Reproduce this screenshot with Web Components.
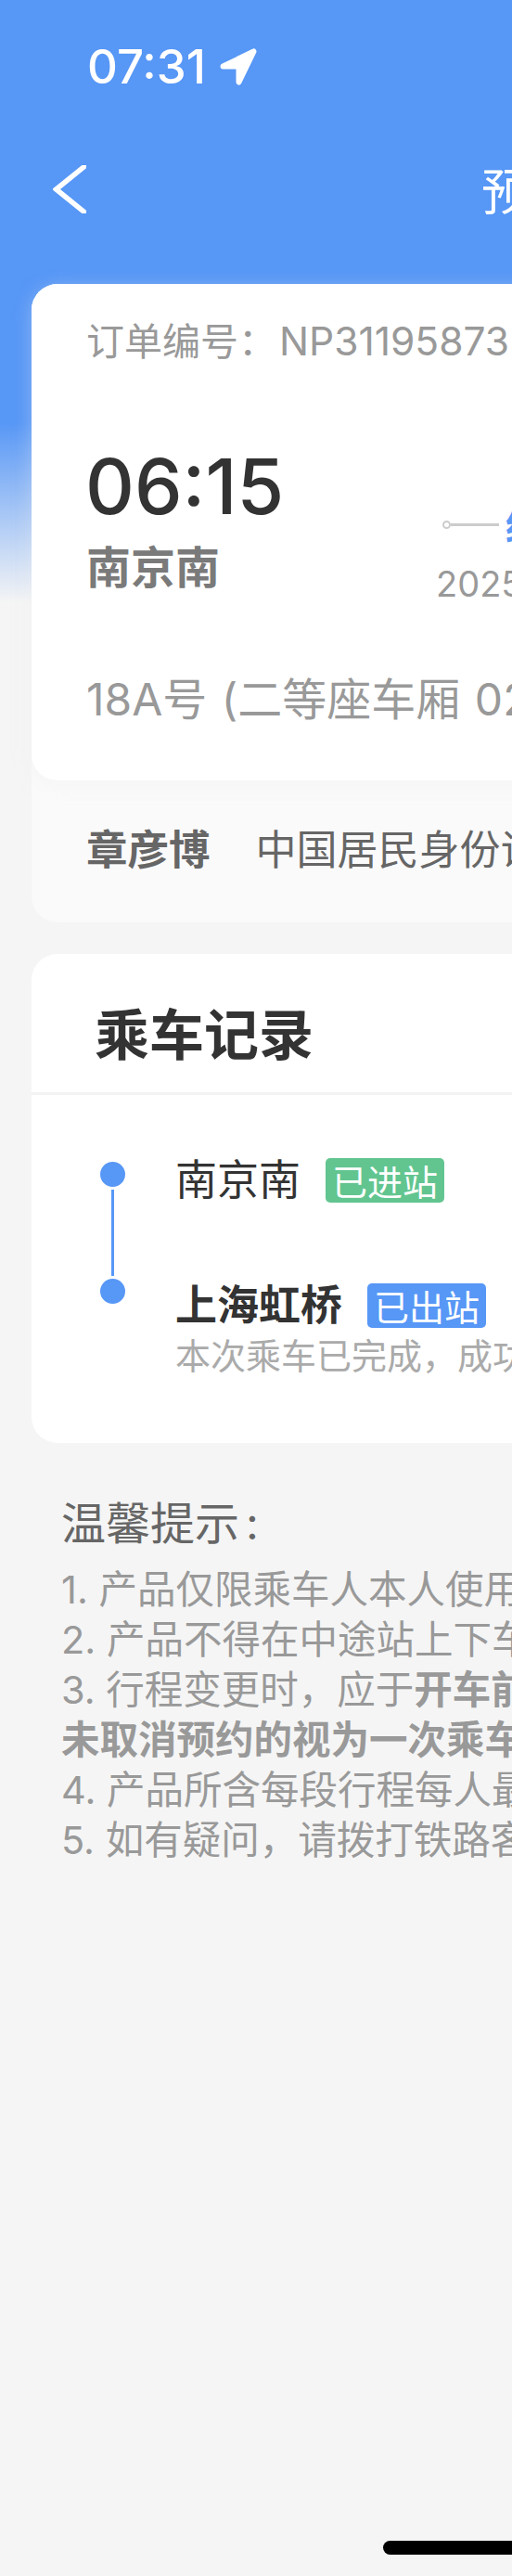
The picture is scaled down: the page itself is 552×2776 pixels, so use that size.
<!DOCTYPE html>
<html lang="zh">
<head>
<meta charset="utf-8">
<title>预约详情</title>
<style>
  html, body { margin: 0; padding: 0; background: #f5f5f5; }
  body { width: 552px; height: 2776px; overflow: hidden; font-family: Inter, "Noto Sans CJK SC", sans-serif; }
</style>
</head>
<body>
<order-page>
  <status-bar time="07:31"></status-bar>
  <nav-bar title="预约详情"></nav-bar>
  <ticket-card order="NP31195873" time="06:15" station="南京南" date="2025" seat="18A号 (二等座车厢 02" passenger="章彦博" idtype="中国居民身份证"></ticket-card>
  <ride-record>
    <ride-stop name="南京南" tag="已进站" tone="green"></ride-stop>
    <ride-stop name="上海虹桥" tag="已出站" tone="blue" bold note="本次乘车已完成，成功"></ride-stop>
  </ride-record>
  <tips-block heading="温馨提示">
    <div>1. 产品仅限乘车人本人使用</div>
    <div>2. 产品不得在中途站上下车</div>
    <div>3. 行程变更时，应于<b>开车前</b></div>
    <div><b>未取消预约的视为一次乘车</b></div>
    <div>4. 产品所含每段行程每人最</div>
    <div>5. 如有疑问，请拨打铁路客</div>
  </tips-block>
</order-page>
<script>
class OrderPage extends HTMLElement {
  constructor() {
    super();
    this.attachShadow({mode: 'open'}).innerHTML = `
      <style>
        :host { display: block; width: 552px; height: 2776px; position: relative; overflow: hidden;
          background: linear-gradient(#5797f6 0, #5797f6 455px, #f5f5f5 650px); }
        .indicator { position: absolute; left: 413px; top: 2738px; width: 400px; height: 15px; border-radius: 8px; background: #000; }
      </style>
      <slot></slot>
      <div class="indicator"></div>`;
  }
}

class StatusBar extends HTMLElement {
  constructor() {
    super();
    this.attachShadow({mode: 'open'}).innerHTML = `
      <style>
        :host { display: flex; align-items: center; height: 144px; box-sizing: border-box; padding: 0 0 0 94px;
          color: #fff; font: 500 51px/50px Inter, sans-serif; }
        svg { margin-left: 15px; width: 40px; height: 40px; }
      </style>
      <span id="t"></span>
      <svg viewBox="0 0 40 40"><path d="M3.500 19.500 36.500 3.500 20.500 36.500V19.500z" fill="#fff" stroke="#fff" stroke-width="6" stroke-linejoin="round"/></svg>`;
  }
  connectedCallback() { this.shadowRoot.getElementById('t').textContent = this.getAttribute('time'); }
}

class NavBar extends HTMLElement {
  constructor() {
    super();
    this.attachShadow({mode: 'open'}).innerHTML = `
      <style>
        :host { display: flex; align-items: center; height: 162px; padding: 0 0 42px 57px; box-sizing: border-box; width: 1200px; color: #fff; }
        svg { width: 36px; height: 52px; }
        span { margin-left: 426px; font: 400 54px/60px "Noto Sans CJK SC", sans-serif; white-space: nowrap; }
      </style>
      <svg viewBox="0 0 36 52"><path d="M37 -1 3.500 26 37 53" fill="none" stroke="#fff" stroke-width="5.500"/></svg>
      <span id="t"></span>`;
  }
  connectedCallback() { this.shadowRoot.getElementById('t').textContent = this.getAttribute('title'); }
}

class TicketCard extends HTMLElement {
  constructor() {
    super();
    this.attachShadow({mode: 'open'}).innerHTML = `
      <style>
        :host { display: block; margin-left: 34px; width: 1100px; border-radius: 28px; background: #fafafa;
          font-family: Inter, "Noto Sans CJK SC", sans-serif; white-space: nowrap; }
        .main { height: 535px; box-sizing: border-box; padding: 34px 0 0 59px; background: #fff; border-radius: 28px;
          box-shadow: 0 4px 20px rgba(238,238,238,.35); position: relative; }
        .order { font-size: 41px; line-height: 56px; color: #999; }
        .order span { font-size: 42.500px; margin-left: 3px; }
        .row { display: flex; margin-top: 84px; }
        .from { width: 377px; }
        .time { font-size: 82px; font-weight: 500; line-height: 90px; color: #333; margin-left: -1px; }
        .station { font: 700 48px/64px "Noto Sans CJK SC", sans-serif; color: #7a7a7a; margin-top: 6px; }
        .mid { padding-top: 65px; }
        .line { display: flex; align-items: center; height: 40px; padding-left: 7px; }
        .line i { width: 9px; height: 9px; box-sizing: border-box; border: 2px solid #ccc; border-radius: 50%; }
        .line u { width: 52px; height: 3px; background: #ccc; }
        .line b { margin-left: 7px; color: #5797f6; font: 700 40px/40px "Noto Sans CJK SC", sans-serif; }
        .date { font-size: 38px; line-height: 44px; color: #999; margin-top: 22px; }
        .seat { font-size: 48px; line-height: 64px; color: #999; margin-top: 71px; word-spacing: 2px; }
        .person { height: 153px; box-sizing: border-box; padding: 41px 0 0 59px; display: flex; gap: 49px; font: 44px/62px "Noto Sans CJK SC", sans-serif; color: #666; }
        .person b { font-weight: 700; font-size: 44.500px; }
      </style>
      <div class="main">
        <div class="order">订单编号：<span id="order"></span></div>
        <div class="row">
          <div class="from">
            <div class="time" id="time"></div>
            <div class="station" id="station"></div>
          </div>
          <div class="mid">
            <div class="line"><i></i><u></u><b>经</b></div>
            <div class="date" id="date"></div>
          </div>
        </div>
        <div class="seat" id="seat"></div>
      </div>
      <div class="person"><b id="passenger"></b><span id="idtype"></span></div>`;
  }
  connectedCallback() {
    for (const k of ['order','time','station','date','seat','passenger','idtype'])
      this.shadowRoot.getElementById(k).textContent = this.getAttribute(k);
  }
}

class RideRecord extends HTMLElement {
  constructor() {
    super();
    this.attachShadow({mode: 'open'}).innerHTML = `
      <style>
        :host { display: block; margin: 34px 0 0 34px; width: 1100px; height: 527px; background: #fff; border-radius: 28px; }
        .head { height: 152px; box-sizing: border-box; padding: 49px 0 0 68px; border-bottom: 3px solid #f3f3f3;
          font: 700 59px/70px "Noto Sans CJK SC", sans-serif; color: #333; }
        .body { padding: 68px 0 0 74px; }
      </style>
      <div class="head">乘车记录</div>
      <div class="body"><slot></slot></div>`;
  }
}

class RideStop extends HTMLElement {
  constructor() {
    super();
    this.attachShadow({mode: 'open'}).innerHTML = `
      <style>
        :host { display: grid; grid-template-columns: 27px auto; column-gap: 54px; height: 126px; white-space: nowrap; }
        .dot { width: 27px; height: 27px; border-radius: 50%; background: #5797f6; margin-top: 4px; position: relative; }
        .rail { position: absolute; left: 12px; top: 30px; width: 3px; height: 93px; background: #5797f6; }
        .top { display: flex; align-items: center; gap: 27px; height: 48px; }
        :host([bold]) .content { margin-top: 9px; }
        .name { font: 400 45px/48px "Noto Sans CJK SC", sans-serif; color: #333; margin-bottom: 6px; }
        :host([bold]) .name { font-weight: 700; }
        .tag { height: 48px; padding: 0 7px; border-radius: 5px; color: #fff; font: 400 38px/48px "Noto Sans CJK SC", sans-serif; }
        :host([tone=green]) .tag { background: #62c590; }
        :host([tone=blue]) .tag { background: #5797f6; }
        .note { font: 400 38px/46px "Noto Sans CJK SC", sans-serif; color: #aaa; margin-top: 5px; }
      </style>
      <div class="dot"><div class="rail" id="rail"></div></div>
      <div class="content">
        <div class="top"><span class="name" id="name"></span><span class="tag" id="tag"></span></div>
        <div class="note" id="note"></div>
      </div>`;
  }
  connectedCallback() {
    const s = this.shadowRoot;
    s.getElementById('name').textContent = this.getAttribute('name');
    s.getElementById('tag').textContent = this.getAttribute('tag');
    s.getElementById('note').textContent = this.getAttribute('note') || '';
    if (this.hasAttribute('note')) s.getElementById('rail').remove();
  }
}

class TipsBlock extends HTMLElement {
  constructor() {
    super();
    this.attachShadow({mode: 'open'}).innerHTML = `
      <style>
        :host { display: block; margin: 52px 0 0 66px; width: 1000px; font: 400 41.500px/54px Inter, "Noto Sans CJK SC", sans-serif; color: #999; white-space: nowrap; }
        .head { font-size: 48px; line-height: 70px; color: #666; margin-bottom: 9px; }
        .head .colon { margin-left: 7px; }
        ::slotted(div) { height: 54px; }
      </style>
      <div class="head"><span id="h"></span><span class="colon">:</span></div>
      <slot></slot>`;
  }
  connectedCallback() { this.shadowRoot.getElementById('h').textContent = this.getAttribute('heading'); }
}

customElements.define('order-page', OrderPage);
customElements.define('status-bar', StatusBar);
customElements.define('nav-bar', NavBar);
customElements.define('ticket-card', TicketCard);
customElements.define('ride-record', RideRecord);
customElements.define('ride-stop', RideStop);
customElements.define('tips-block', TipsBlock);
</script>
</body>
</html>
